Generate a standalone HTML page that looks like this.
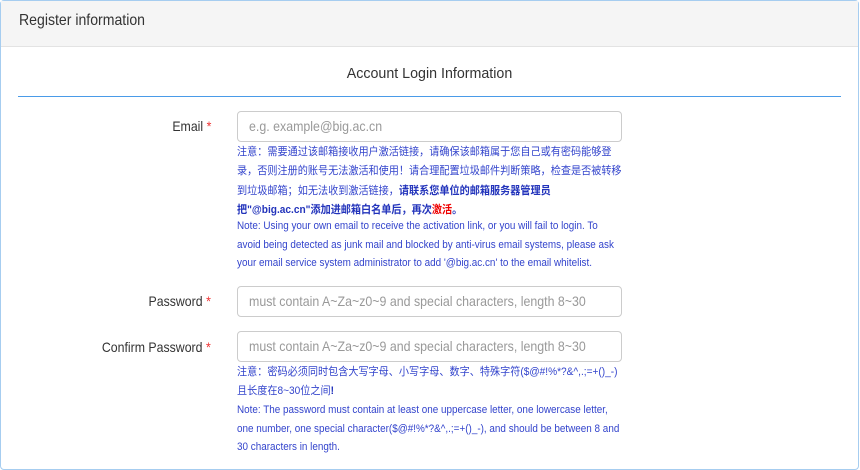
<!DOCTYPE html>
<html><head><meta charset="utf-8"><style>
*{box-sizing:border-box;margin:0;padding:0}
body{width:860px;height:460px;overflow:hidden;background:#fff;font-family:"Liberation Sans","Noto Sans CJK SC",sans-serif;color:#333}
.panel{position:absolute;left:0;top:0;width:859px;height:470px;border:1px solid #a6cdf0;border-radius:4px}
.hd{height:46px;background:#f5f5f5;border-bottom:1px solid #e3e3e3}
.hdt{position:absolute;left:19px;top:12px;font-size:16px;transform:scaleX(0.88);transform-origin:left;white-space:nowrap}
.title{position:absolute;left:0;width:859px;top:65px;text-align:center;font-size:15px;transform:scaleX(0.95)}
.line{position:absolute;left:18px;width:823px;top:96px;height:1px;background:#4a9be8}
.lbl{position:absolute;right:649px;font-size:14px;text-align:right;white-space:nowrap;transform:scaleX(0.88);transform-origin:right}
.lbl i{color:#e33;font-style:normal;margin-left:4px}
.inp{position:absolute;left:237px;width:385px;height:31px;border:1px solid #ccc;border-radius:4px}
.ph{position:absolute;left:249px;font-size:14px;color:#999;white-space:nowrap;transform:scaleX(0.885);transform-origin:left}
.n{position:absolute;left:237px;font-size:11px;color:#3344cc;white-space:nowrap;transform:scaleX(0.9);transform-origin:left;line-height:14px}
.zh{transform:scaleX(0.92)}
.n b{color:#2233bb}
.red{color:#e00;font-weight:bold}
</style></head><body>
<div class="panel"><div class="hd"></div></div>
<div class="hdt">Register information</div>
<div class="title">Account Login Information</div>
<div class="line"></div>
<div class="lbl" style="top:118px">Email<i>*</i></div>
<div class="inp" style="top:111px"></div><div class="ph" style="top:118px">e.g. example@big.ac.cn</div>
<div class="n zh" style="top:145px">注意：需要通过该邮箱接收用户激活链接，请确保该邮箱属于您自己或有密码能够登</div>
<div class="n zh" style="top:164px">录，否则注册的账号无法激活和使用！请合理配置垃圾邮件判断策略，检查是否被转移</div>
<div class="n zh" style="top:184px">到垃圾邮箱；如无法收到激活链接，<b>请联系您单位的邮箱服务器管理员</b></div>
<div class="n zh" style="top:203px"><b>把"@big.ac.cn"添加进邮箱白名单后，再次<span class="red">激活</span>。</b></div>
<div class="n" style="top:219px">Note: Using your own email to receive the activation link, or you will fail to login. To</div>
<div class="n" style="top:238px">avoid being detected as junk mail and blocked by anti-virus email systems, please ask</div>
<div class="n" style="top:256px">your email service system administrator to add '@big.ac.cn' to the email whitelist.</div>
<div class="lbl" style="top:293px">Password<i>*</i></div>
<div class="inp" style="top:286px"></div><div class="ph" style="top:293px">must contain A~Za~z0~9 and special characters, length 8~30</div>
<div class="lbl" style="top:339px">Confirm Password<i>*</i></div>
<div class="inp" style="top:331px"></div><div class="ph" style="top:338px">must contain A~Za~z0~9 and special characters, length 8~30</div>
<div class="n zh" style="top:365px">注意：密码必须同时包含大写字母、小写字母、数字、特殊字符($@#!%*?&amp;^,.;=+()_-)</div>
<div class="n zh" style="top:384px">且长度在8~30位之间<b>!</b></div>
<div class="n" style="top:403px">Note: The password must contain at least one uppercase letter, one lowercase letter,</div>
<div class="n" style="top:422px">one number, one special character($@#!%*?&amp;^,.;=+()_-), and should be between 8 and</div>
<div class="n" style="top:440px">30 characters in length.</div>
</body></html>
